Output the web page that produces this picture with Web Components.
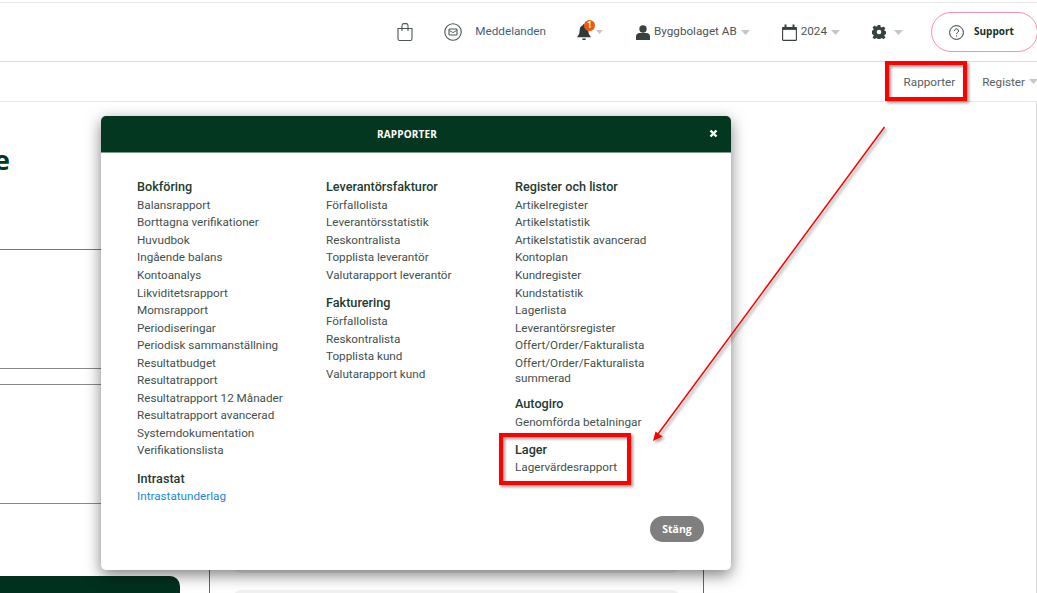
<!DOCTYPE html>
<html lang="sv">
<head>
<meta charset="utf-8">
<title>Rapporter</title>
<style>
html,body{margin:0;padding:0;height:593px;overflow:hidden;background:#fff;}
body{font-family:Roboto,"Liberation Sans",sans-serif;font-size:11.7px;color:#3c4a46;position:relative;}
</style>
</head>
<body>
<app-topbar></app-topbar>
<app-subbar></app-subbar>
<app-main></app-main>
<report-dialog title="Rapporter">
  <report-column>
    <report-section heading="Bokföring" items="Balansrapport|Borttagna verifikationer|Huvudbok|Ingående balans|Kontoanalys|Likviditetsrapport|Momsrapport|Periodiseringar|Periodisk sammanställning|Resultatbudget|Resultatrapport|Resultatrapport 12 Månader|Resultatrapport avancerad|Systemdokumentation|Verifikationslista"></report-section>
    <report-section heading="Intrastat" link items="Intrastatunderlag"></report-section>
  </report-column>
  <report-column>
    <report-section heading="Leverantörsfakturor" items="Förfallolista|Leverantörsstatistik|Reskontralista|Topplista leverantör|Valutarapport leverantör"></report-section>
    <report-section heading="Fakturering" items="Förfallolista|Reskontralista|Topplista kund|Valutarapport kund"></report-section>
  </report-column>
  <report-column>
    <report-section heading="Register och listor" items="Artikelregister|Artikelstatistik|Artikelstatistik avancerad|Kontoplan|Kundregister|Kundstatistik|Lagerlista|Leverantörsregister|Offert/Order/Fakturalista|Offert/Order/Fakturalista summerad"></report-section>
    <report-section style="margin-top:-1.6px" heading="Autogiro" items="Genomförda betalningar"></report-section>
    <report-section style="margin-top:-0.8px" heading="Lager" items="Lagervärdesrapport"></report-section>
  </report-column>
</report-dialog>
<annotation-layer></annotation-layer>

<script>
const caret = `<svg class="caret" width="9" height="5" viewBox="0 0 9 5"><path d="M0 0h9L4.5 5z" fill="#c4c8c8"/></svg>`;

class AppTopbar extends HTMLElement{
    constructor(){
        super();
        this.shadow = this.attachShadow({mode:'open'});
    }
    connectedCallback(){
        this.shadow.innerHTML = `
        <style>
        :host{display:flex;align-items:center;justify-content:flex-end;height:58px;margin-top:2px;border-top:1px solid #e6e6e6;border-bottom:1px solid #dcdcdc;box-sizing:content-box;overflow:hidden;font-size:11.7px;color:#4a5652;}
        .item{display:flex;align-items:center;flex:none;}
        svg{display:block;flex:none;}
        .bag{margin-right:31px;}
        .mail{margin-right:13px;}
        .msg{margin-right:31px;color:#3f5f78;padding-bottom:2px;}
        .bell{margin-right:33px;position:relative;}
        .badge{position:absolute;left:7px;top:-4px;width:11px;height:11px;border-radius:50%;background:#f0590e;color:#fff;font-size:9px;line-height:11px;text-align:center;font-weight:500;}
        .bell .caret{margin-left:5px;margin-top:-1px;width:7px;height:4px;}
        .user{margin-right:32px;}
        .user span,.year span{margin:0 4px 2px;}
        .year{margin-right:32px;}
        .gear{margin-right:28px;}
        .gear .caret{margin-left:8px;}
        .support{width:107px;height:40px;box-sizing:border-box;border:1.3px solid #f58fb0;border-radius:20px;display:flex;align-items:center;padding-left:17px;gap:10px;font:700 10px "Open Sans","Liberation Sans",sans-serif;color:#14302a;flex:none;margin-right:-1px;}
        .support span{margin-bottom:2px;}
        </style>
        <div class="item bag">
          <svg width="16" height="18" viewBox="0 0 16 18" fill="none" stroke="#4c5654" stroke-width="1.100"><path d="M1 5.500h14v10.500a1.800 1.800 0 0 1-1.800 1.500H2.800A1.800 1.800 0 0 1 1 16z"/><path d="M5 8V2.500A2 2 0 0 1 7 .6h2a2 2 0 0 1 2 1.900V8"/></svg>
        </div>
        <div class="item mail">
          <svg width="18" height="18" viewBox="0 0 18 18" fill="none" stroke="#4c5654"><circle cx="9" cy="9" r="8.200" stroke-width="1.100"/><rect x="5" y="6" width="8" height="6" rx=".8" stroke-width="1.100"/><path d="M5.400 7.500 9 9.600l3.600-2.100" stroke-width=".9"/></svg>
        </div>
        <div class="item msg">Meddelanden</div>
        <div class="item bell">
          <svg width="14" height="16" viewBox="0 0 16 16" preserveAspectRatio="none"><path d="M8 0a1.200 1.200 0 0 1 1.200 1.300c2.400.5 3.800 2.400 3.800 5 0 3.400 1 4.700 2.500 6.200v.8H.5v-.8C2 11 3 9.700 3 6.300c0-2.600 1.400-4.500 3.800-5A1.200 1.200 0 0 1 8 0zM6 14.500h4a2 2 0 0 1-4 0z" fill="#303a38"/></svg>
          <span class="badge">1</span>
          ${caret}
        </div>
        <div class="item user">
          <svg width="14" height="15" viewBox="0 0 14 15"><circle cx="7" cy="4" r="3.700" fill="#38423f"/><path d="M0 15v-3.500C0 9.500 1.500 8 3.500 8h7c2 0 3.500 1.500 3.500 3.500V15z" fill="#38423f"/></svg>
          <span>Byggbolaget AB</span>${caret}
        </div>
        <div class="item year">
          <svg width="15" height="17" viewBox="0 0 15 17" fill="none" stroke="#38423f"><rect x=".6" y="3.500" width="13.800" height="12.900" rx="1" stroke-width="1.100"/><path d="M.6 3.500h13.800v2H.6z" fill="#38423f" stroke-width=".8"/><path d="M3.500 .5v3M11.500 .5v3" stroke-width="2"/></svg>
          <span>2024</span>${caret}
        </div>
        <div class="item gear">
          <svg width="14" height="14" viewBox="0 0 14 14"><path fill="#38423f" fill-rule="evenodd" d="M5.700 0h2.600l.4 2 1.100.5 1.800-1.100 1.800 1.800-1.100 1.800.5 1.100 2 .4v2.600l-2 .4-.5 1.100 1.100 1.800-1.800 1.800-1.800-1.100-1.100.5-.4 2H5.700l-.4-2-1.100-.5-1.800 1.100-1.800-1.800 1.100-1.800-.5-1.100-2-.4V5.700l2-.4.5-1.100L.6 2.400l1.800-1.800 1.800 1.100 1.100-.5zM7 4.700a2.300 2.300 0 1 0 0 4.600 2.300 2.300 0 0 0 0-4.600z"/></svg>
          ${caret}
        </div>
        <div class="support">
          <svg width="15" height="15" viewBox="0 0 15 15" fill="none" stroke="#2b3a36"><circle cx="7.500" cy="7.500" r="6.900" stroke-width="1"/><path d="M5.500 5.800a2 2 0 1 1 3 1.800c-.7.400-1 .8-1 1.500" stroke-width="1"/><path d="M7.500 10.500v1.100" stroke-width="1.100"/></svg>
          <span>Support</span>
        </div>`;
    }
}
customElements.define('app-topbar', AppTopbar);

class AppSubbar extends HTMLElement{
    constructor(){
        super();
        this.shadow = this.attachShadow({mode:'open'});
    }
    connectedCallback(){
        this.shadow.innerHTML = `
        <style>
        :host{display:flex;align-items:center;justify-content:flex-end;height:39px;border-bottom:1px solid #e6e6e6;overflow:hidden;font-size:11.7px;color:#55605d;}
        .rep{margin-right:27px;}
        .reg{margin-right:-1px;display:flex;align-items:center;gap:4px;flex:none;}
        svg{display:block;}
        </style>
        <span class="rep">Rapporter</span>
        <span class="reg">Register ${caret}</span>`;
    }
}
customElements.define('app-subbar', AppSubbar);

class AppMain extends HTMLElement{
    constructor(){
        super();
        this.shadow = this.attachShadow({mode:'open'});
    }
    connectedCallback(){
        this.shadow.innerHTML = `
        <style>
        :host{display:grid;grid-template-columns:209px 495px 1fr;height:491px;overflow:hidden;}
        .left{display:flex;flex-direction:column;}
        h1{margin:0;height:148px;box-sizing:border-box;padding-top:43px;font:700 27px/30px "Open Sans","Liberation Sans",sans-serif;color:#03371f;text-indent:-6px;border-bottom:1px solid #777;}
        .row{border-bottom:1px solid #888;flex:none;}
        .card{width:180px;height:40px;margin-top:72px;background:#02301f;border-radius:0 10px 0 0;}
        .center{margin-top:40px;border:solid #666;border-width:0 1px;padding:0 23px;display:flex;flex-direction:column;box-sizing:border-box;}
        .box{background:#f1f1f1;border-radius:8px;flex:none;}
        .box.a{height:431px;}
        .box.b{height:60px;margin-top:17px;}
        .right{border-right:1px solid #d9d9d9;}
        </style>
        <div class="left">
          <h1>e</h1>
          <div class="row" style="height:118px"></div>
          <div class="row" style="height:15px"></div>
          <div class="row" style="height:118px"></div>
          <div class="card"></div>
        </div>
        <div class="center"><div class="box a"></div><div class="box b"></div></div>
        <div class="right"></div>`;
    }
}
customElements.define('app-main', AppMain);

class ReportDialog extends HTMLElement{
    constructor(){
        super();
        this.shadow = this.attachShadow({mode:'open'});
    }
    connectedCallback(){
        this.shadow.innerHTML = `
        <style>
        :host{position:absolute;left:101px;top:116px;width:630px;height:454px;background:#fff;border-radius:5px;box-shadow:0 5px 15px rgba(0,0,0,.5);display:flex;flex-direction:column;}
        header{height:37px;flex:none;padding-right:18px;background:#03371f;border-radius:5px 5px 0 0;border-bottom:1px solid #7f9a8e;box-sizing:border-box;display:flex;align-items:center;justify-content:center;position:relative;color:#fff;font:700 10px "Open Sans","Liberation Sans",sans-serif;letter-spacing:.15px;text-transform:uppercase;}
        .x{position:absolute;right:13px;top:13px;display:block;}
        .body{flex:1;display:flex;padding:26px 0 0 36px;}
        footer{position:absolute;right:27px;bottom:28px;width:54px;height:26px;background:#7f7f7f;border-radius:13px;color:#fff;font:700 10.5px/26px "Open Sans","Liberation Sans",sans-serif;text-align:center;}
        </style>
        <header>${this.getAttribute('title')}
          <svg class="x" width="9" height="9" viewBox="0 0 9 9"><path d="M1.500 1.500l6 6M7.500 1.500l-6 6" stroke="#fff" stroke-width="2.400"/></svg>
        </header>
        <div class="body"><slot></slot></div>
        <footer>Stäng</footer>`;
    }
}
customElements.define('report-dialog', ReportDialog);

class ReportColumn extends HTMLElement{
    constructor(){
        super();
        this.shadow = this.attachShadow({mode:'open'});
    }
    connectedCallback(){
        this.shadow.innerHTML = `
        <style>
        :host{display:block;width:189px;flex:none;padding-right:28px;box-sizing:border-box;}
        </style>
        <slot></slot>`;
    }
}
customElements.define('report-column', ReportColumn);

class ReportSection extends HTMLElement{
    constructor(){
        super();
        this.shadow = this.attachShadow({mode:'open'});
    }
    connectedCallback(){
        let items = this.getAttribute('items').split('|');
        let isLink = this.hasAttribute('link');
        this.shadow.innerHTML = `
        <style>
        :host{display:block;margin-bottom:9.7px;}
        h4{margin:0;font:500 12.65px/15px Roboto,"Liberation Sans",sans-serif;color:#1d3a30;padding-bottom:3.800px;}
        ul{list-style:none;margin:0;padding:0;}
        li{font-size:11.7px;line-height:15px;padding-bottom:2.550px;color:#42504c;}
        li.link{color:#1b87d6;}
        </style>
        <h4>${this.getAttribute('heading')}</h4>
        <ul>${items.map(i => `<li class="${isLink ? 'link' : ''}">${i}</li>`).join('')}</ul>`;
    }
}
customElements.define('report-section', ReportSection);

class AnnotationLayer extends HTMLElement{
    constructor(){
        super();
        this.shadow = this.attachShadow({mode:'open'});
    }
    connectedCallback(){
        this.shadow.innerHTML = `
        <style>
        :host{position:absolute;left:0;top:0;width:1037px;height:593px;pointer-events:none;}
        svg{display:block;}
        </style>
        <svg width="1037" height="593" viewBox="0 0 1037 593">
          <defs><filter id="s" x="-20%" y="-20%" width="140%" height="140%"><feDropShadow dx="2" dy="2" stdDeviation="1.500" flood-color="#000" flood-opacity=".4"/></filter></defs>
          <g filter="url(#s)" fill="none" stroke="#f00" stroke-width="4">
            <rect x="887" y="63" width="78" height="36"/>
            <rect x="501" y="435" width="128" height="48"/>
          </g>
          <g filter="url(#s)">
            <path d="M884.500 127 658 434" stroke="#f00" stroke-width="1.500" fill="none"/>
            <path d="M653 441 655.500 431.500 662.500 436.500z" fill="#f00"/>
          </g>
        </svg>`;
    }
}
customElements.define('annotation-layer', AnnotationLayer);
</script>
</body>
</html>
